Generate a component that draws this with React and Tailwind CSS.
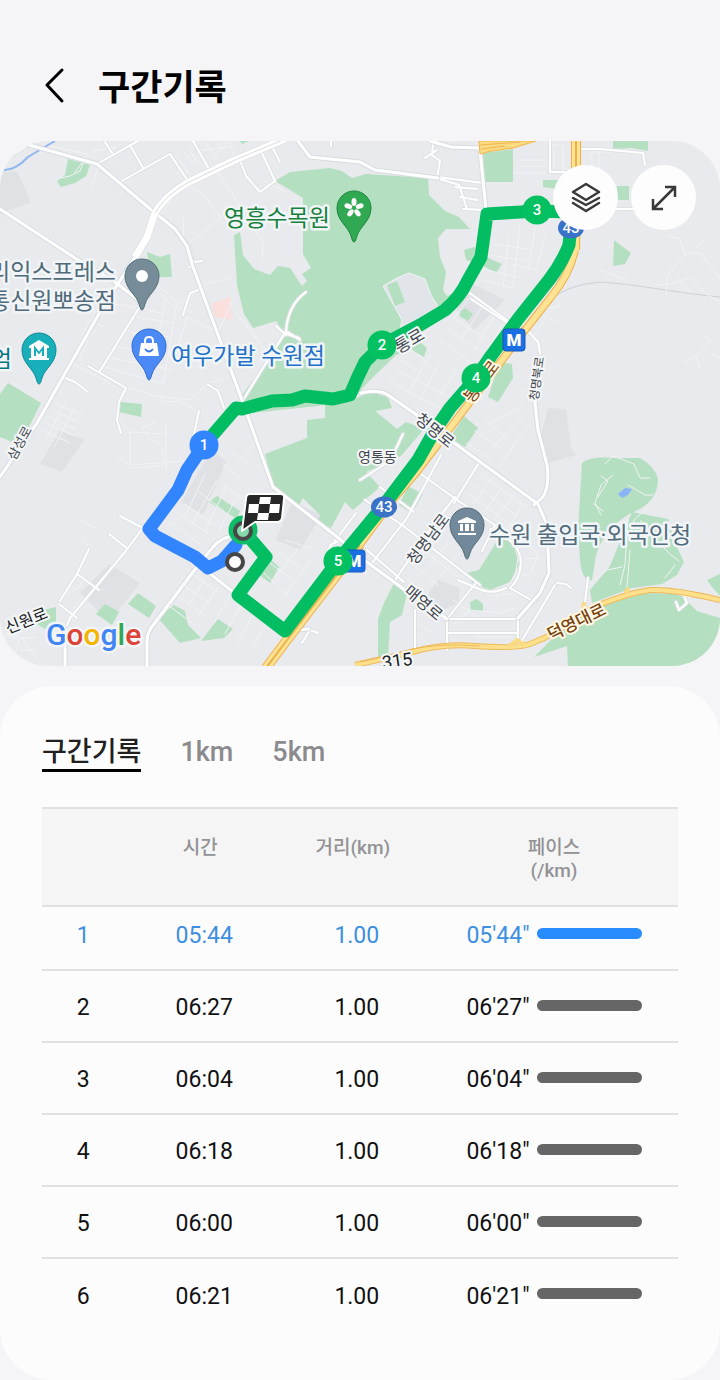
import { useState } from "react";

const splits = [
  { time: "05:44", distance: "1.00", pace: "05'44\"", best: true },
  { time: "06:27", distance: "1.00", pace: "06'27\"" },
  { time: "06:04", distance: "1.00", pace: "06'04\"" },
  { time: "06:18", distance: "1.00", pace: "06'18\"" },
  { time: "06:00", distance: "1.00", pace: "06'00\"" },
  { time: "06:21", distance: "1.00", pace: "06'21\"" },
];

const tabs = ["구간기록", "1km", "5km"];

const parks = [
  "M275 181L290 172L330 168L342 171L352 178L366 174L428 178L429 195L445 211L459 217L470 229L446 229L438 238L440 257L446 272L443 290L447 296L460 290L430 326L421 328L412 335L427 348L424 357L412 350L396 355L370 380L352 400L318 406L242 414L240 398L284 338L283 332L276 321L253 328L244 314L237 285L234 235L240 232L243 255L254 269L270 275L278 266L290 268L302 286L307 281L302 274L311 268L303 254L303 198L290 190Z",
  "M325 403L352 400L370 392L388 397L392 408L375 411L397 429L406 422L424 429L401 456L366 472L380 487L353 510L345 502L331 528L318 521L320 515L303 498L298 507L273 486L265 454L307 438L307 420L325 418Z",
  "M68 159L83 163L90 165L86 176L75 183L61 187L57 181L65 175Z",
  "M240 141H249L242 144Z",
  "M147 252L160 257L170 254L172 277L150 277Z",
  "M8 383L41 403L20 445L0 437V394Z",
  "M120 402L142 404L141 417L119 412Z",
  "M483 153L513 149V182H485Z",
  "M613 141H648V151L632 148L613 149Z",
  "M543 180H558V189L543 187Z",
  "M617 186H629V200H617Z",
  "M614 240L631 253L625 264L613 266Z",
  "M464 250L474 247L481 255L502 264L496 273L478 263L466 260Z",
  "M461 311L465 308L473 314L468 321L459 316Z",
  "M500 362L512 364L513 378L498 402L488 397Z",
  "M464 416L478 428L465 447L450 438Z",
  "M408 486L423 494L412 513L399 505Z",
  "M217 496L240 511L237 519L209 502Z",
  "M105 604L119 612L112 625L96 614Z",
  "M138 593L156 606L149 618L128 604Z",
  "M270 559L279 567L270 583L258 574Z",
  "M174 605L185 611L188 625L201 638L180 643L158 618Z",
  "M218 619L233 629L224 638L201 641Z",
  "M36 612L56 607V626L48 631L37 624Z",
  "M497 541L506 537L513 542L519 565L510 582L490 590L472 583L467 573L479 570Z",
  "M582 463Q590 456 615 458L640 458Q657 468 658 481Q657 499 640 509Q606 523 596 555L592 580Q582 582 580 560L578 530Z",
  "M632 512L668 519L676 545L684 562L677 575L662 584L632 588L592 603L590 590L610 566Z",
  "M590 608Q608 595 640 593L680 594L697 611L720 618V666H568L567 646L534 657L545 646L563 628L580 620Z",
  "M394 583L408 589L402 615L390 622L388 657H378V619L384 603Z",
  "M470 602L477 599L483 604V611H471Z",
  "M707 580L720 574V596L712 587Z",
];

const builtUp = [
  "M0 172L17 171L31 202L0 214Z",
  "M60 430L84 440L62 472L40 464Z",
  "M212 450L226 462L203 515L181 502Z",
  "M292 502L322 515L300 550L276 540Z",
  "M385 285L410 273L425 280L437 318L398 337Z",
  "M469 282L505 300L474 330L457 310Z",
  "M548 408L566 409L571 448L576 455L548 463L540 440Z",
  "M424 600L438 580L460 588L458 603L440 612Z",
  "M80 593L109 564L140 583L109 622Z",
];

const minorRoads = [
  "M50 146L87 154L80 171L70 176L60 178M75 172L84 160M92 151L116 147L102 161M92 186L98 167",
  "M175 154L190 175M182 150L195 165M188 148L199 164M202 150L228 147M205 143L218 158M215 142L224 150M212 158L229 143M230 145L235 157",
  "M216 170L232 193L245 218L263 241L262 260M187 184L205 196L221 218L188 244M165 190L170 202L160 215M263 180L286 192M184 215L183 235",
  "M205 284L230 278M201 289L180 304L153 282M187 317L218 332L233 300M235 312L244 322L265 350M160 293L172 305L192 312M143 309L165 314M136 317L174 323M130 332L170 337M119 347L164 354M112 358L173 370M105 367L163 384M165 300L157 345M176 307L163 386M187 317L175 356M95 311L85 342M103 302L140 308",
  "M110 383L70 362L96 329M103 327L90 319L77 348M88 339L80 359M123 386L156 396L189 400L208 383L226 379M160 397L164 402L180 401L201 413L212 425M117 417L130 432V468L163 466V448M142 428L156 422M142 428L151 440L163 445M130 432L165 434M117 456L130 465L157 463L184 461M166 422V470",
  "M55 403L83 416M51 409L80 423M48 416L77 430M46 423L74 436M43 430L70 443M65 404L45 442M74 408L55 446",
  "M244 456L255 442M222 463L240 478M230 451L252 466M224 485L245 501M199 492L224 511M185 504L216 526M178 513L209 534M170 522L200 544M205 474L186 515M217 480L193 522M226 487L205 532M238 494L218 533M248 503L229 539",
  "M187 570L218 592M179 582L210 604M173 592L205 616M165 603L195 625M205 579L190 603M217 588L199 615M230 596L214 623M242 603L225 634M255 612L237 643M269 617L253 648M285 540L310 548M277 551L304 570M270 563L294 581M264 573L287 595M298 548L275 578M311 561L285 595",
  "M490 230V212H530M493 244L528 249M490 255L526 261M487 270L520 278M483 280L513 288M509 237L503 287M520 225L513 285M536 225L528 270M546 235L536 269M512 264L535 270M471 296L450 323M484 304L462 338M495 314L475 350M503 323L483 358M455 319L489 341M448 329L480 351M440 340L469 361",
  "M410 348L430 366M401 360L425 376M396 370L450 397M389 381L439 408M430 356L410 390M440 362L419 401M456 370L437 400M484 420L506 437M475 431L501 448M466 443L492 460M524 405L488 424M524 415L489 452M527 428L499 466",
  "M537 310L550 308L562 305M534 336L548 314L558 305M538 338V348M548 318L558 322M668 236L680 239L685 255L667 275L666 295M656 285L670 284L690 278L705 293L720 302M685 253L700 253L720 278M697 248L704 240M675 275L692 293M700 335L711 340L696 356L684 362M696 356L700 368M710 353L720 358",
  "M605 464L613 456L634 464L640 478L650 478M628 485L645 495L653 495M613 475L601 485L595 503L601 515M601 476L608 481L598 497M594 504L603 511M596 522L600 528M650 506L634 520L629 540M628 520L625 565L620 585M640 520L656 540L671 555L679 561M630 550L627 587M665 578L675 565M596 580L607 570L622 567",
  "M482 475L525 506M475 485L517 516M469 494L512 526M464 503L503 532M490 481L474 503M501 489L484 512M512 498L494 520M522 505L507 531M497 540Q510 537 520 546L515 575L503 593M522 545Q534 546 538 556L530 574M526 558L541 559M520 573L530 577",
  "M405 577L430 598M412 564L438 585M424 551L458 577M448 543L429 566M460 553L441 576M453 600L478 618M480 590L494 596L513 593M454 624L470 610L500 613L514 608M417 623L432 632M420 637L431 646M475 637H512M477 648H513",
  "M0 637Q20 630 27 645L37 658M7 633L19 641L15 654M20 650L35 650M20 639L36 637M65 596L80 587L84 575M68 617L79 601L83 603L72 620ZM80 520L98 530M83 537L89 549M60 601L75 585",
  "M550 145H563V170M554 149V169M587 152H612M592 153V179M599 151V181M519 160H545M517 166H545M514 173H545M600 270L627 280",
];

const localRoads = [
  "M97 164L138 141M120 182L170 154L190 184M130 145L143 168M193 141L208 167M105 142L112 153M0 163L30 144L40 147",
  "M240 160L246 176L260 192L275 181L262 153M270 143L280 162M142 303L100 371M63 377L75 382L88 392M88 366L126 388L119 402L117 420L121 433",
  "M188 244L193 262L202 261M194 267L189 267",
  "M201 289L190 293L183 315",
  "M331 141V146M243 400L286 331L300 340M286 331Q288 305 306 292M284 333L299 338M276 326L286 335M207 384L218 391L224 408M199 411L195 430L190 447",
  "M433 143L432 155L440 161L437 178L459 185L467 209L484 210M438 177L483 183M455 187L477 189M460 197L478 200M463 209L481 210M437 150L425 158",
  "M550 141V172H565M617 209H633M581 149L600 149L643 153L645 165M460 286L512 324M471 299L509 324M527 330L538 342L541 358",
  "M120 516L143 528L125 552L70 618L65 630M109 534L128 549M77 574L99 590M59 604L77 618M89 549L77 574L60 601",
  "M403 434L390 461L360 480M365 500L402 525L480 585M380 487L414 512M367 550L404 582M372 563L407 518L441 455M418 472L460 502L495 525L482 551M454 503L480 461M395 580L430 529L455 497M447 619L475 584",
  "M447 619V650M415 610V650M447 619H518V647L555 585M447 633H518M557 583L566 584L571 588M588 578L585 602M682 590L687 603L679 610L676 602M680 594L691 597",
  "M490 529Q520 540 521 562Q520 580 510 588L535 602M458 580L479 589Q491 595 506 588M302 643L310 630L318 633M328 550L356 513M330 545L341 540",
];

const mainRoads = [
  "M22 143L97 164L155 213L175 229L187 246L193 267L242 400L273 487L341 540L360 557L405 590L447 619",
  "M0 209L75 258L115 282L142 303M135 257L100 312L63 377L37 423L0 477M298 141L310 157L360 162L375 170L438 178",
  "M430 141L451 147L479 148M480 150L486 210M147 666V641Q147 632 154 624L190 576L213 547Q222 536 239 535",
  "M361 393Q380 388 391 397L414 413L461 448L538 504L547 525L549 573L540 593L518 618M541 357L535 403L538 430L547 465Q550 485 543 497L534 505M149 529L195 562L241 598L285 631L309 629M65 628V666",
];

const plainLabels = [
  { text: "영통동", x: 358, y: 462, size: 14, rotate: 0 },
  { text: "삼성로", x: 15, y: 461, size: 13, rotate: -61 },
  { text: "통로", x: 399, y: 354, size: 17, rotate: -31 },
  { text: "청명로", x: 414, y: 421, size: 16, rotate: 39 },
  { text: "청명북로", x: 538, y: 401, size: 12, rotate: -82 },
  { text: "청명남로", x: 415, y: 566, size: 16, rotate: -53 },
  { text: "매영로", x: 403, y: 593, size: 16, rotate: 40 },
];

const hangul = "'Roboto','Noto Sans CJK KR',sans-serif";

function Roads({ paths, width, color }) {
  return (
    <g fill="none" stroke={color} strokeWidth={width} strokeLinecap="round" strokeLinejoin="round">
      {paths.map((d) => (
        <path key={d} d={d} />
      ))}
    </g>
  );
}

function Pin({ x, y, color, edge, children }) {
  return (
    <g transform={`translate(${x} ${y})`}>
      <path
        d="M0 34C-1.500 34 -2 31 -3 28C-6 18 -17 13 -17 0A17 17 0 0 1 17 0C17 13 6 18 3 28C2 31 1.500 34 0 34Z"
        fill={color}
        stroke={edge}
        strokeWidth="1"
      />
      {children}
    </g>
  );
}

function PlaceLabel({ x, y, color, anchor = "start", children }) {
  return (
    <text
      x={x}
      y={y}
      fontSize="23"
      fill={color}
      stroke="#f1f5f7"
      strokeWidth="5"
      strokeLinejoin="round"
      paintOrder="stroke"
      textAnchor={anchor}
    >
      {children}
    </text>
  );
}

function Metro({ x, y }) {
  return (
    <g>
      <rect x={x - 11} y={y - 11} width="22" height="22" rx="3" fill="#1a6fe4" stroke="#1459bd" />
      <text x={x} y={y + 6} fontSize="17" fontWeight="900" fill="#fff" textAnchor="middle">
        M
      </text>
    </g>
  );
}

function Shield({ x, y }) {
  return (
    <g>
      <ellipse cx={x} cy={y} rx="13" ry="10.500" fill="#3a72c8" />
      <text x={x} y={y + 5} fontSize="15" fontWeight="500" fill="#fff" textAnchor="middle">
        43
      </text>
    </g>
  );
}

function Marker({ x, y, n, color = "#03c160" }) {
  return (
    <g>
      <circle cx={x} cy={y} r="14.500" fill={color} />
      <text x={x} y={y + 5} fontSize="15" fontWeight="500" fill="#fff" textAnchor="middle">
        {n}
      </text>
    </g>
  );
}

function RouteMap() {
  return (
    <svg viewBox="0 141 720 525" className="block w-full" fontFamily={hangul} role="img" aria-label="지도">
      <rect x="0" y="141" width="720" height="525" fill="#e8eaed" />
      <g fill="#dfe1e5">
        {builtUp.map((d) => (
          <path key={d} d={d} />
        ))}
      </g>
      <g fill="#b4dfc0">
        {parks.map((d) => (
          <path key={d} d={d} />
        ))}
      </g>
      <path d="M383 286L397 278L409 273L425 279L431 295L442 313L421 326L395 350L402 320Z" fill="#e1e4e8" stroke="#f1f4f5" />
      <path d="M387 285L397 281L405 302L395 306Z" fill="#b4dfc0" />
      <path d="M211 304L230 297L232 320L215 317Z" fill="#fbdfdd" />
      <path d="M618 494L625 488L632 489L628 495L622 498Z" fill="#8ab4f8" />
      <path d="M0 170Q14 172 28 157L55 141" fill="none" stroke="#90b8ef" strokeWidth="2" />
      <path d="M540 307Q565 284 600 282C635 284 670 292 720 297" fill="none" stroke="#cdd2d6" strokeWidth="1" />
      <Roads paths={minorRoads} width={1} color="#f1f3f5" />
      <Roads paths={localRoads} width={4} color="#dfe2e5" />
      <Roads paths={localRoads} width={2} color="#ffffff" />
      <Roads paths={mainRoads} width={5} color="#d8dce0" />
      <Roads paths={mainRoads} width={3} color="#ffffff" />
      <g fill="none" strokeLinejoin="round">
        <path d="M285 139L235 160L187 183Q165 196 155 213L147 237L135 257" stroke="#d7dadd" strokeWidth="8" />
        <path d="M285 139L235 160L187 183Q165 196 155 213L147 237L135 257" stroke="#fff" strokeWidth="7" />
        <path d="M285 139L235 160L187 183Q165 196 155 213" stroke="#d7dadd" strokeWidth="1" />
      </g>
      <path d="M479 141H536L513 148L492 151L480 154Z" fill="#fadb82" stroke="#f3b64a" />
      <path d="M480 145L520 142M481 149L505 146" stroke="#efb652" fill="none" />
      <g fill="none" strokeLinejoin="round">
        <path d="M576 141V210L575 250M360 545L287 640L266 668" stroke="#eeb04b" strokeWidth="10" />
        <path d="M576 141V210L575 250M360 545L287 640L266 668" stroke="#fde293" strokeWidth="8" />
        <path
          d="M575 250Q570 274 551 297L525 330L466 407L416 473L395 497L358 547"
          stroke="#eeb04b"
          strokeWidth="8"
        />
        <path
          d="M575 250Q570 274 551 297L525 330L466 407L416 473L395 497L358 547"
          stroke="#fde293"
          strokeWidth="6"
        />
        <path d="M576 141V210M360 545L287 640L266 668" stroke="#eab249" strokeWidth="2" />
        <path
          d="M355 665Q387 658 412 652Q443 643 475 646Q515 649 530 644Q560 633 585 611Q623 594 650 590Q675 589 720 600"
          stroke="#eeb95a"
          strokeWidth="6"
        />
        <path
          d="M355 665Q387 658 412 652Q443 643 475 646Q515 649 530 644Q560 633 585 611Q623 594 650 590Q675 589 720 600"
          stroke="#fde08c"
          strokeWidth="4"
        />
        <path d="M360 662Q387 657 412 649Q443 643 480 646" stroke="#eeb95a" strokeWidth="1" />
        <path d="M508 647L517 640L524 645M625 593L629 588M583 610L584 602" stroke="#fadb82" strokeWidth="4" />
      </g>

      <g fill="none" strokeWidth="13" strokeLinejoin="round" strokeLinecap="round">
        <path
          d="M204 445L236 408L242 409L272 401L292 400L305 396L333 399L350 395Q357 378 365 362L382 345L420 325L445 310Q460 297 467 282L481 257L487 214L537 211L568 212L571 225L569 245Q562 263 549 280L518 319L491 356L476 378L450 408L435 430L418 460L384 505L338 561L285 631L238 595L266 557L242 529"
          stroke="#03bd62"
        />
        <path d="M204 445L187 470L178 490L149 529L155 536L195 557L208 568L222 561L236 545" stroke="#3385ff" />
      </g>

      <g
        fill="#42474d"
        stroke="#f4f6f8"
        strokeWidth="4"
        strokeLinejoin="round"
        paintOrder="stroke"
      >
        {plainLabels.map(({ text, x, y, size, rotate }) => (
          <text key={text} x={x} y={y} fontSize={size} transform={`rotate(${rotate} ${x} ${y})`}>
            {text}
          </text>
        ))}
        <g fill="#7a4312" stroke="#fff8e3">
          <text x="472" y="404" fontSize="17" transform="rotate(-53 472 404)">봉영로</text>
          <text x="551" y="641" fontSize="17" fontWeight="500" transform="rotate(-26 551 641)">덕영대로</text>
        </g>
        <g fill="#16191c">
          <text x="8" y="634" fontSize="16" transform="rotate(-22 8 634)">신원로</text>
          <text x="383" y="669" fontSize="18" transform="rotate(-8 383 669)">315</text>
        </g>
      </g>

      <Shield x={571} y={228} />
      <Shield x={384} y={507} />
      <Metro x={514} y={340} />
      <Metro x={354} y={561} />

      <Pin x={354} y={208} color="#31a852" edge="#1d8741">
        <g fill="#fff">
          {[0, 72, 144, 216, 288].map((a) => (
            <ellipse key={a} cx="0" cy="-6" rx="2.500" ry="4" transform={`rotate(${a})`} />
          ))}
        </g>
      </Pin>
      <Pin x={142} y={276} color="#768c99" edge="#596f7b">
        <circle r="6" fill="#fff" />
      </Pin>
      <Pin x={39} y={350} color="#18afbb" edge="#0d8994">
        <path d="M-10 -4L0 -10L10 -4V-2H8V8H10V10H-10V8H-8V-2H-10Z" fill="#fff" />
        <path d="M-4 6V-2L0 3L4 -2V6" fill="none" stroke="#18afbb" strokeWidth="2" />
      </Pin>
      <Pin x={149} y={346} color="#4b89f4" edge="#2f69cf">
        <path d="M-8 -3H8L10 10H-10Z" fill="#fff" />
        <path d="M-4 -2V-5Q-4 -9 0 -9Q4 -9 4 -5V-2" fill="none" stroke="#fff" strokeWidth="2" />
        <path d="M-4 3Q0 8 4 3" fill="none" stroke="#3979e8" strokeWidth="2" />
      </Pin>
      <Pin x={467} y={525} color="#71899a" edge="#526a77">
        <path d="M-9 -4L0 -8L9 -4V-2H-9ZM-7 -1H-4V6H-7ZM-2 -1H2V6H-2ZM4 -1H7V6H4ZM-9 8H9V10H-9Z" fill="#fff" />
      </Pin>

      <PlaceLabel x={224} y={226} color="#16803c">영흥수목원</PlaceLabel>
      <PlaceLabel x={116} y={280} color="#506a79" anchor="end">리익스프레스</PlaceLabel>
      <PlaceLabel x={116} y={309} color="#506a79" anchor="end">통신원뽀송점</PlaceLabel>
      <PlaceLabel x={12} y={367} color="#08767f" anchor="end">엄</PlaceLabel>
      <PlaceLabel x={171} y={364} color="#2170c8">여우가발 수원점</PlaceLabel>
      <PlaceLabel x={489} y={543} color="#526b7c">수원 출입국·외국인청</PlaceLabel>

      <Marker x={204} y={445} n={1} color="#3385ff" />
      <Marker x={382} y={345} n={2} />
      <Marker x={537} y={210} n={3} />
      <Marker x={476} y={378} n={4} />
      <Marker x={338} y={561} n={5} />

      <circle cx="243" cy="530" r="14.500" fill="#0fbd68" />
      <circle cx="243" cy="531" r="8" fill="#84d8aa" stroke="#474747" strokeWidth="4" />
      <circle cx="235" cy="562" r="8" fill="#fff" stroke="#474747" strokeWidth="4" />
      <path
        d="M250 494H280Q285 494 284 499L282 518Q281 522 277 522H255L242 531L246 499Q246 494 250 494Z"
        fill="#272727"
        stroke="#fff"
        strokeWidth="2"
        strokeLinejoin="round"
      />
      <path
        d="M260 497H271L270 504H259ZM249 504H259L258 513H248ZM270 504H280L279 513H269ZM258 513H269L268 520H257Z"
        fill="#fff"
      />

      <text
        x="46"
        y="645"
        fontSize="30"
        fontWeight="500"
        stroke="#f3f5f7"
        strokeWidth="5"
        strokeLinejoin="round"
        paintOrder="stroke"
      >
        <tspan fill="#4285f4">G</tspan>
        <tspan fill="#db4437">o</tspan>
        <tspan fill="#f4b400">o</tspan>
        <tspan fill="#4285f4">g</tspan>
        <tspan fill="#34a853">l</tspan>
        <tspan fill="#db4437">e</tspan>
      </text>
    </svg>
  );
}

function MapButton({ label, children }) {
  return (
    <button type="button" aria-label={label} className="flex size-[65px] items-center justify-center rounded-full bg-[#fdfdfd]">
      <svg
        viewBox="0 0 32 32"
        className="size-8"
        fill="none"
        stroke="#393939"
        strokeWidth="2.500"
        strokeLinecap="round"
        strokeLinejoin="round"
      >
        {children}
      </svg>
    </button>
  );
}

function SplitRow({ split, number }) {
  const first = number === 1;
  const last = number === splits.length;
  const pad = first ? "pt-[17px]" : "pt-1";
  return (
    <tr
      className={`${first ? "h-16 align-top text-[#3d8fe0]" : "h-[72px] text-[#111111]"} ${
        last ? "" : "border-b-2 border-[#e1e1e3]"
      }`}
    >
      <td className={pad}>{number}</td>
      <td className={pad}>{split.time}</td>
      <td className={pad}>{split.distance}</td>
      <td className={pad}>
        <div className="flex items-center justify-center gap-[7px]">
          <span>{split.pace}</span>
          <span className={`mb-1.5 h-[11px] w-[105px] rounded-full ${split.best ? "bg-[#288cff]" : "bg-[#666666]"}`} />
        </div>
      </td>
    </tr>
  );
}

export default function App() {
  const [active, setActive] = useState(tabs[0]);
  return (
    <div className="flex min-h-screen flex-col bg-[#f5f5f7] font-['Roboto','Noto_Sans_CJK_KR',sans-serif]">
      <header className="flex items-center gap-[22px] px-8 pt-[60px] pb-[29px]">
        <button type="button" aria-label="뒤로" className="flex size-11 items-center justify-center">
          <svg viewBox="0 0 44 44" className="size-11" fill="none" stroke="#000" strokeWidth="3" strokeLinecap="round" strokeLinejoin="round">
            <path d="M30 6L15 21L30 37" />
          </svg>
        </button>
        <h1 className="pt-1.5 text-[35px] leading-[46px] font-semibold text-black">구간기록</h1>
      </header>

      <section className="relative mt-0 overflow-hidden rounded-[48px]">
        <RouteMap />
        <div className="absolute top-6 right-6 flex gap-[13px]">
          <MapButton label="지도 유형">
            <path d="M16 2L29 10L16 18L3 10Z" />
            <path d="M3 16L16 23L29 16M3 21L16 29L29 21" />
          </MapButton>
          <MapButton label="전체 화면">
            <path d="M5 27L27 5M17 5H27V15M5 17V27H15" strokeLinecap="butt" strokeLinejoin="miter" />
          </MapButton>
        </div>
      </section>

      <main className="mt-5 flex-1 rounded-[52px] bg-[#fcfcfd] px-[42px] pt-12 pb-12">
        <div role="tablist" className="flex gap-[39px]">
          {tabs.map((tab) => (
            <button
              key={tab}
              type="button"
              role="tab"
              aria-selected={tab === active}
              onClick={() => setActive(tab)}
              className={`h-[38px] border-b-3 text-[27px] leading-9 font-medium ${
                tab === active ? "border-black text-[#202020]" : "border-transparent text-[#8b8b8e]"
              }`}
            >
              {tab}
            </button>
          ))}
        </div>

        <table className="mt-[35px] w-full table-fixed border-collapse text-center text-[23px] leading-6">
          <colgroup>
            <col className="w-[13%]" />
            <col className="w-[25%]" />
            <col className="w-[23%]" />
            <col className="w-[39%]" />
          </colgroup>
          <thead>
            <tr className="h-[98px] border-y-2 border-[#e1e1e3] bg-[#f5f5f5] align-top text-[19px] leading-[23px] text-[#929295]">
              <th aria-label="구간" />
              <th className="pt-[27px] pr-2 font-medium">시간</th>
              <th className="pt-[27px] pr-2 font-medium">거리(km)</th>
              <th className="pt-[27px] font-medium">
                페이스
                <br />
                (/km)
              </th>
            </tr>
          </thead>
          <tbody>
            {splits.map((split, i) => (
              <SplitRow key={i} split={split} number={i + 1} />
            ))}
          </tbody>
        </table>
      </main>
    </div>
  );
}
